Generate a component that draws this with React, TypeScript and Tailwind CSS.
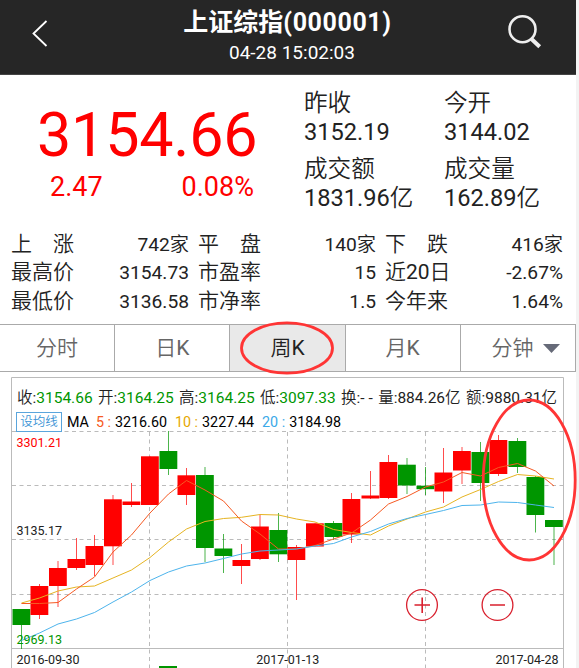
import clsx from 'clsx'

type Candle = { x: number; up: boolean; high: number; top: number; bottom: number; low: number }

const c = (x: number, up: boolean, high: number, top: number, bottom: number, low: number): Candle => ({
  x, up, high, top, bottom, low,
})

// y values are in plot pixels, offset by the plot origin in the viewBox
const CANDLES: Candle[] = [
  c(21.5, false, 609, 609, 625, 649),
  c(39.5, true, 584, 586, 615, 619),
  c(58, true, 561, 568, 586, 607),
  c(76.5, true, 538, 559, 568, 570),
  c(94.5, true, 535, 546, 565, 576),
  c(113, true, 495, 499.3, 546.3, 565),
  c(131.5, true, 483, 501.5, 505, 507),
  c(150, true, 456.3, 456.3, 505, 505),
  c(168.5, false, 431, 451, 469, 475),
  c(186.5, true, 468, 475.3, 495, 505),
  c(205, false, 467, 475, 548, 562),
  c(223.5, false, 534, 548.5, 556, 573),
  c(241.5, true, 544, 560, 566, 584),
  c(260, true, 515, 526.5, 559, 560),
  c(278.5, false, 513, 530, 554.3, 562),
  c(296.5, true, 545, 547, 560, 600),
  c(315, true, 523.3, 523.3, 546.5, 546.5),
  c(333.5, false, 521, 523, 537, 540),
  c(351.5, true, 493, 499, 534.5, 543),
  c(370.5, true, 471, 495.5, 498.5, 499),
  c(388.5, true, 455, 462, 498, 499),
  c(407, false, 458, 464.7, 485.5, 494),
  c(425.5, false, 467, 485.7, 489.2, 495),
  c(443.5, true, 448, 472.5, 491.5, 503),
  c(462, true, 447, 451, 470.5, 484),
  c(480.5, false, 442, 452, 483, 501),
  c(498.5, true, 435, 440, 474, 476),
  c(517.5, false, 438, 441, 467, 473),
  c(535.5, false, 476, 477, 515, 532.5),
  c(554, false, 520, 520, 527, 565),
]

const MA5 = [603.5, 603.5, 602.5, 589, 577, 552, 535, 513, 494, 480.5, 490, 501, 521, 534, 549, 549, 545.5, 539, 533, 520, 504, 496.5, 487, 482, 472.5, 476, 467.5, 463.5, 471, 486]
const MA10 = [603, 598, 591, 587, 586, 578, 570, 557.5, 542, 529, 521.5, 518.5, 517.3, 514.5, 515, 519, 522, 529.5, 532.5, 535, 526, 519, 512, 507, 497, 489.5, 481.5, 474.5, 476, 479]
const MA20 = [640.5, 633, 624, 619, 612.5, 602, 592, 580.5, 572, 566, 563, 558.5, 554, 551, 550, 549, 546, 543.5, 537, 531.5, 524, 518.5, 514.5, 510.5, 505.5, 505, 502, 502.5, 505, 507.5]

const toPoints = (ys: number[]) => ys.map((y, i) => `${CANDLES[i].x},${y}`).join(' ')

const QUOTES = [
  [{ label: '昨收', value: '3152.19' }, { label: '今开', value: '3144.02' }],
  [{ label: '成交额', value: '1831.96亿' }, { label: '成交量', value: '162.89亿' }],
]

const STATS = [
  [['上　涨', '742家'], ['平　盘', '140家'], ['下　跌', '416家']],
  [['最高价', '3154.73'], ['市盈率', '15'], ['近20日', '-2.67%']],
  [['最低价', '3136.58'], ['市净率', '1.5'], ['今年来', '1.64%']],
]

const TABS = ['分时', '日K', '周K', '月K', '分钟']

const OHLC = [
  { label: '收:', value: '3154.66', green: true },
  { label: '开:', value: '3164.25', green: true },
  { label: '高:', value: '3164.25', green: true },
  { label: '低:', value: '3097.33', green: true },
  { label: '换:', value: '- -', green: false },
  { label: '量:', value: '884.26亿', green: false },
  { label: '额:', value: '9880.31亿', green: false },
]

function Header() {
  return (
    <header className="flex h-[75px] items-start justify-between border-b border-[#444] bg-[#262626] font-[Roboto,'Noto_Sans_CJK_SC',sans-serif] text-white">
      <svg className="ml-[31px] mt-[19px] h-[30px] w-[18px]" viewBox="0 0 18 30" fill="none" stroke="#fff" strokeWidth="1.8">
        <path d="M15.5 2L2.5 14.5L15.5 27" />
      </svg>
      <div className="flex flex-col items-center whitespace-nowrap pl-[18px] pt-[7px]">
        <h1 className="text-[25px] font-bold leading-[32px]">
          上证综指<span className="tracking-[0.6px]">(000001)</span>
        </h1>
        <p className="pl-[9px] text-[19px] leading-[28px]">04-28 15:02:03</p>
      </div>
      <svg className="mr-[34px] mt-[14px] h-[36px] w-[34px]" viewBox="0 0 34 36" fill="none" stroke="#eee">
        <circle cx="14.5" cy="15.2" r="13" strokeWidth="2.6" />
        <path d="M23.5 25L31.7 32.8" strokeWidth="4" />
      </svg>
    </header>
  )
}

function Summary() {
  return (
    <section className="flex h-[153px] whitespace-nowrap">
      <div className="w-[304px] shrink-0 text-[#f00]">
        <div className="pl-[37px] pt-[28px] text-[61px] leading-[64px] tracking-[-0.2px]">3154.66</div>
        <div className="flex justify-between pl-[50px] pr-[50px] pt-[4px] text-[27px] leading-[32px]">
          <span>2.47</span>
          <span>0.08%</span>
        </div>
      </div>
      <div className="flex shrink-0 flex-col gap-[9px] pt-[14px] text-[23.6px] leading-[28.5px]">
        {QUOTES.map((row) => (
          <div key={row[0].label} className="flex">
            {row.map((q) => (
              <div key={q.label} className="w-[140px]">
                <div>{q.label}</div>
                <div>{q.value}</div>
              </div>
            ))}
          </div>
        ))}
      </div>
    </section>
  )
}

function Stats() {
  return (
    <section className="flex h-[96px] flex-col whitespace-nowrap pl-[11px] pr-[12px] pt-[2px]">
      {STATS.map((row, i) => (
        <div key={i} className="grid h-[28.3px] grid-cols-[178px_178px_178px] gap-[9px] leading-[28.3px]">
          {row.map(([label, value]) => (
            <div key={label} className="flex items-baseline justify-between">
              <span className="text-[21px]">{label}</span>
              <span className="text-[19.2px]">{value}</span>
            </div>
          ))}
        </div>
      ))}
    </section>
  )
}

function Tabs() {
  return (
    <nav className="relative grid h-[48px] grid-cols-5 divide-x divide-[#aaa] border-y border-[#aaa] text-[21px] text-[#666]">
      {TABS.map((tab, i) => (
        <div
          key={tab}
          className={clsx(
            'flex items-center justify-center pt-[1px]',
            i === 2 && 'bg-[#e9e9e9] text-[#222]',
            i === 4 && 'pl-[16px]',
          )}
        >
          {tab}
          {i === 4 && (
            <svg className="ml-[10px] h-[9px] w-[17px]" viewBox="0 0 17 9">
              <path d="M0 0H17L8.5 9Z" fill="#666a78" />
            </svg>
          )}
        </div>
      ))}
      <svg className="absolute left-[239px] top-[-4px] h-[54px] w-[96px]" viewBox="0 0 96 54">
        <ellipse cx="48" cy="27" rx="45.5" ry="25.2" fill="none" stroke="#ff3535" strokeWidth="2.8" />
      </svg>
    </nav>
  )
}

function KLine() {
  return (
    <svg className="block h-[291px] w-[576px]" viewBox="0 377 576 291" fill="none">
      <path d="M11.5 668V377.5H563.5V668M11.5 648.5H563.5" stroke="#bbb" />
      <g stroke="#bbb" strokeDasharray="4 3.5">
        {[431.5, 485.5, 539.5, 594.5].map((y) => (
          <path key={y} d={`M12 ${y}H563`} />
        ))}
        {[149.5, 287.5, 425.5].map((x) => (
          <path key={x} d={`M${x} 432V668`} />
        ))}
      </g>
      {CANDLES.map(({ x, up, high, top, bottom, low }) => (
        <g key={x} fill={up ? '#f00' : '#009600'}>
          <rect x={x - 0.5} y={high} width="1" height={low - high} opacity="0.7" />
          <rect x={x - 9} y={top} width="17.8" height={bottom - top} />
        </g>
      ))}
      <rect x="159" y="666" width="18" height="2" fill="#009600" />
      <polyline points={toPoints(MA10)} stroke="#e6b422" />
      <polyline points={toPoints(MA5)} stroke="#f65a23" />
      <polyline points={toPoints(MA20)} stroke="#4db4ec" />
      <g fontSize="12.5" fill="#222">
        <text x="16.5" y="446.5" fill="#f00">3301.21</text>
        <text x="16.5" y="535">3135.17</text>
        <text x="16.5" y="644" fill="#009600">2969.13</text>
        <text x="16.5" y="664">2016-09-30</text>
        <text x="287.7" y="664" textAnchor="middle">2017-01-13</text>
        <text x="558.5" y="664" textAnchor="end">2017-04-28</text>
      </g>
      <g stroke="#d9202e" strokeWidth="1.3">
        <circle cx="422" cy="605" r="15.4" />
        <circle cx="497.5" cy="605" r="15.4" />
        <path d="M414.5 605H430M422.2 597.5V613M490 605H505" strokeWidth="1.6" />
      </g>
    </svg>
  )
}

function Chart() {
  return (
    <section className="relative mt-[5px] h-[291px] whitespace-nowrap">
      <KLine />
      <div className="absolute left-[17px] top-[10px] flex gap-[5.4px] text-[15.5px] leading-[22px]">
        {OHLC.map((o) => (
          <span key={o.label}>
            {o.label}
            <span className={o.green ? 'text-[#009600]' : ''}>{o.value}</span>
          </span>
        ))}
      </div>
      <div className="absolute left-[16px] top-[34px] flex items-center text-[14.3px] leading-[20px] text-black">
        <span className="mr-[5px] flex h-[20px] w-[46px] items-center justify-center border border-[#5aa5dc] pt-[1px] text-[12.5px] text-[#3a93d5]">
          设均线
        </span>
        <div className="flex pt-px">
          <span className="mr-[7px]">MA</span>
          <span className="mr-[4px] text-[#f65a23]">5 :</span>
          <span className="mr-[8px]">3216.60</span>
          <span className="mr-[4px] text-[#e6a800]">10 :</span>
          <span className="mr-[8px]">3227.44</span>
          <span className="mr-[4px] text-[#3ba9e8]">20 :</span>
          <span>3184.98</span>
        </div>
      </div>
      <svg className="absolute left-[481px] top-[21px] h-[164px] w-[96px]" viewBox="481 398 96 164">
        <ellipse cx="529.2" cy="480" rx="46" ry="80" fill="none" stroke="#ff3535" strokeWidth="2.8" />
      </svg>
    </section>
  )
}

export default function App() {
  return (
    <div className="h-[668px] w-[579px] overflow-hidden bg-[#f3f3f3]">
      <main className="h-full w-[576px] bg-white font-[Roboto,'Noto_Sans_CJK_SC_DemiLight','Noto_Sans_CJK_SC',sans-serif] text-[#222]">
        <Header />
        <Summary />
        <Stats />
        <Tabs />
        <Chart />
      </main>
    </div>
  )
}
